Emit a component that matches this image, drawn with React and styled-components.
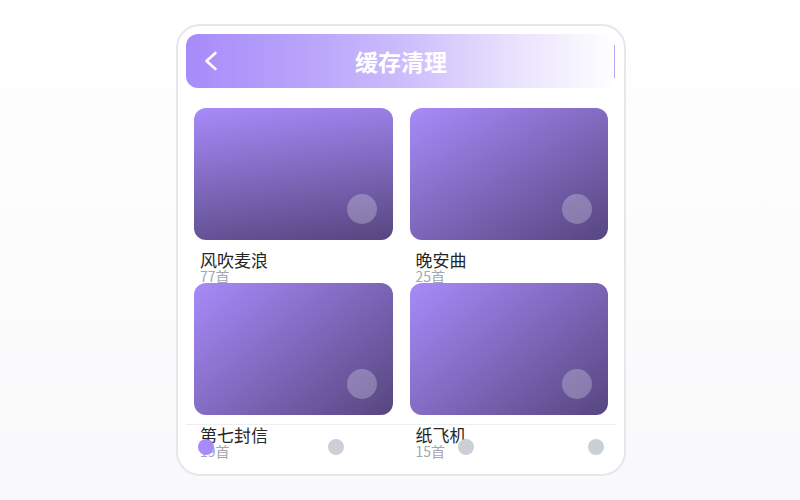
import React from "react";
import styled, { createGlobalStyle } from "styled-components";

const Global = createGlobalStyle`
  html, body { margin: 0; padding: 0; }
  body {
    min-height: 500px;
    background: linear-gradient(180deg, #ffffff 0%, #f9f9fb 100%);
    font-family: "Noto Sans", "Noto Sans CJK SC", sans-serif;
  }
  #root { padding: 24px 0 0 2px; }
`;

const Frame = styled.div`
  box-sizing: border-box;
  width: 450px;
  height: 452px;
  margin: 0 auto;
  padding: 8px;
  border: 2px solid #e6e7eb;
  border-radius: 24px;
  background: #fff;
  display: flex;
  flex-direction: column;
`;

const Header = styled.header`
  position: relative;
  height: 54px;
  flex: none;
  border-radius: 12px;
  background: linear-gradient(90deg, #a78bfa 0%, #bba6fb 30%, #cbbcfc 50%, #e7e0fd 75%, #ffffff 100%);
  display: flex;
  align-items: center;
  justify-content: space-between;
  padding: 0 1px 0 18px;
`;

const BackButton = styled.button`
  border: 0;
  background: none;
  padding: 0;
  width: 14px;
  height: 20px;
  display: flex;
  color: #fff;
`;

const Title = styled.h1`
  position: absolute;
  left: 0;
  right: 0;
  top: 0;
  bottom: 0;
  margin: 0;
  display: flex;
  align-items: center;
  justify-content: center;
  font-family: "Noto Sans CJK SC", sans-serif;
  font-size: 23px;
  font-weight: 700;
  color: #fff;
  pointer-events: none;
`;

const EdgeMark = styled.span`
  width: 1px;
  height: 33px;
  background: #b9a5f7;
`;

const Content = styled.main`
  flex: 1;
  min-height: 0;
  padding: 20px 8px 0;
`;

const Grid = styled.div`
  display: grid;
  grid-template-columns: 1fr 1fr;
  grid-template-rows: repeat(2, 175px);
  column-gap: 17px;
`;

const Item = styled.div`
  display: flex;
  flex-direction: column;
  min-width: 0;
`;

const Cover = styled.div`
  position: relative;
  height: 132px;
  border-radius: 12px;
  background: linear-gradient(${(p) => p.$angle}deg, #a78bfa 0%, #57467f 100%);
`;

const Knob = styled.span`
  position: absolute;
  right: 16px;
  bottom: 16px;
  width: 30px;
  height: 30px;
  border-radius: 50%;
  background: rgba(255, 255, 255, 0.25);
`;

const Name = styled.div`
  margin-top: 9px;
  padding-left: 6px;
  font-family: "Noto Sans CJK SC", sans-serif;
  font-size: 17px;
  line-height: 21px;
  color: #262626;
`;

const Count = styled.div`
  padding-left: 6px;
  margin-top: -1px;
  font-family: "Noto Sans CJK SC", sans-serif;
  font-size: 14px;
  line-height: 14px;
  color: #a3a7ae;
`;

const Nav = styled.nav`
  flex: none;
  box-sizing: border-box;
  height: 42px;
  border-top: 1px solid #eceef1;
  display: flex;
  align-items: center;
  justify-content: space-between;
  padding: 2px 12px 0;
`;

const Dot = styled.span`
  width: 16px;
  height: 16px;
  border-radius: 50%;
  background: ${(p) => (p.$active ? "#a78bfa" : "#cbcfd6")};
`;

const playlists = [
  { name: "风吹麦浪", count: "77首", angle: 172 },
  { name: "晚安曲", count: "25首", angle: 150 },
  { name: "第七封信", count: "19首", angle: 140 },
  { name: "纸飞机", count: "15首", angle: 140 },
];

export default function App() {
  return (
    <>
      <Global />
      <Frame>
        <Header>
          <BackButton aria-label="返回">
            <svg width="14" height="20" viewBox="0 0 14 20" fill="none">
              <polyline
                points="11.5,2 2.5,10 11.5,18"
                stroke="#fff"
                strokeWidth="2.6"
                strokeLinecap="round"
                strokeLinejoin="round"
              />
            </svg>
          </BackButton>
          <Title>缓存清理</Title>
          <EdgeMark />
        </Header>
        <Content>
          <Grid>
            {playlists.map((p) => (
              <Item key={p.name}>
                <Cover $angle={p.angle}>
                  <Knob />
                </Cover>
                <Name>{p.name}</Name>
                <Count>{p.count}</Count>
              </Item>
            ))}
          </Grid>
        </Content>
        <Nav>
          <Dot $active />
          <Dot />
          <Dot />
          <Dot />
        </Nav>
      </Frame>
    </>
  );
}
